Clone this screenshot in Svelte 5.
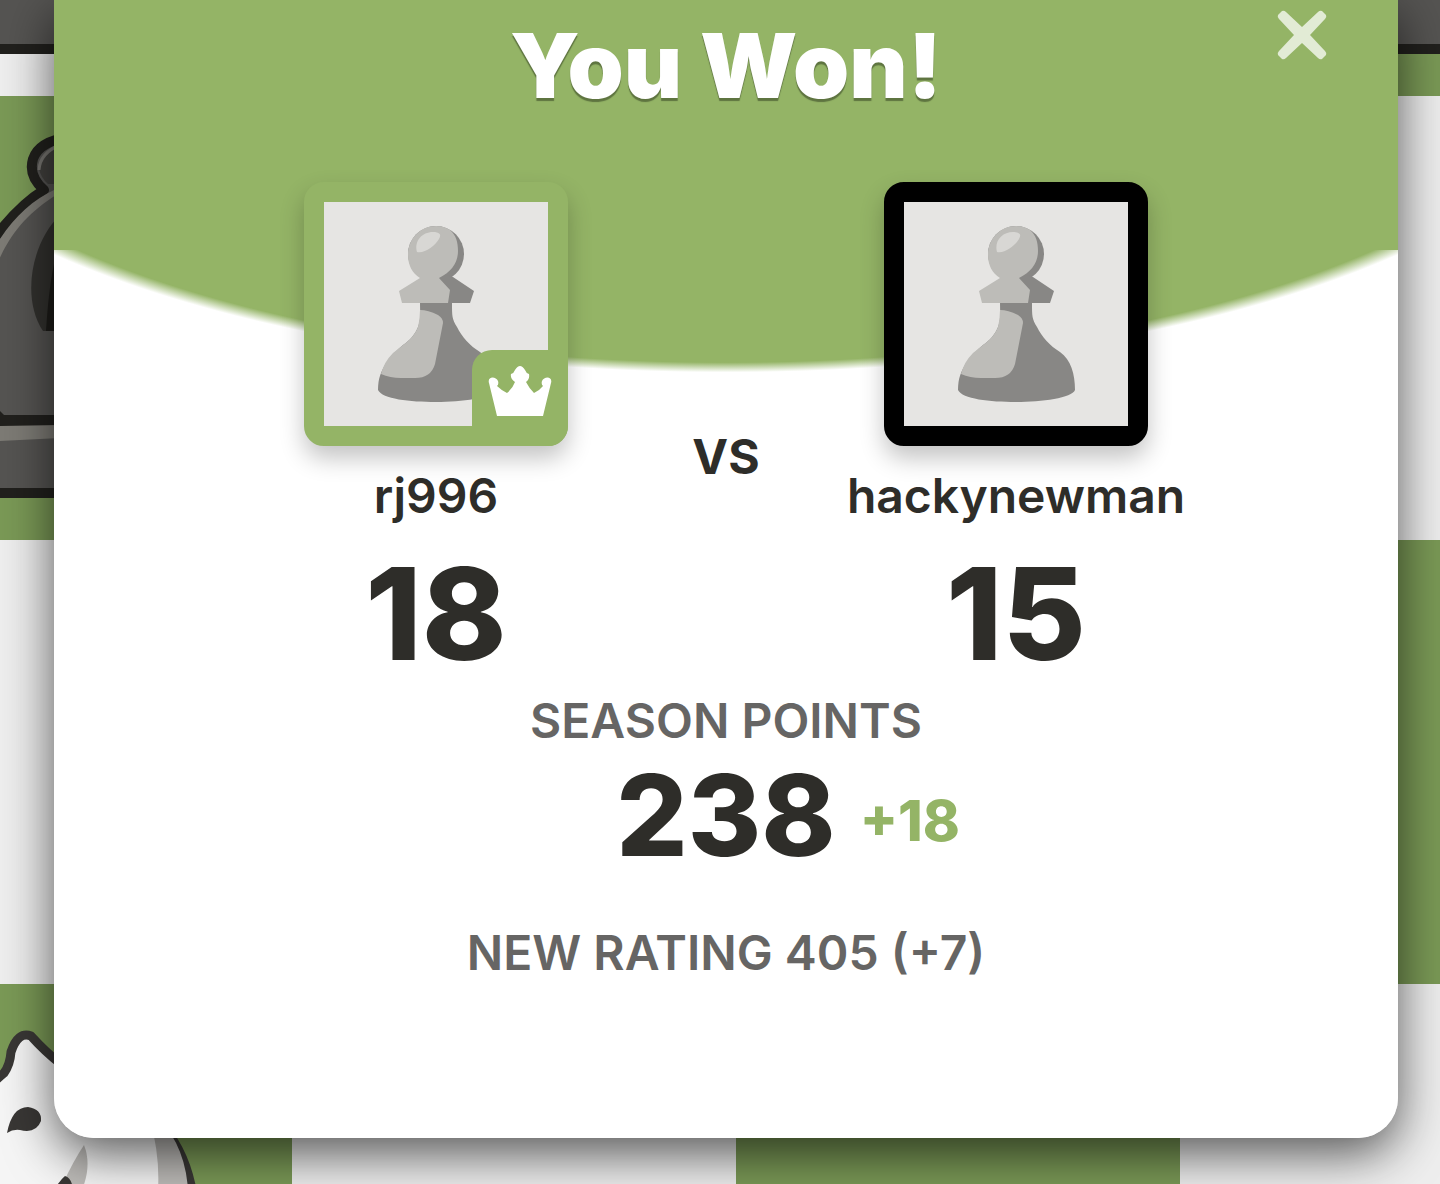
<script>
  const players = [
    { name: 'rj996', score: 18, winner: true },
    { name: 'hackynewman', score: 15, winner: false }
  ];
  let open = $state(true);
</script>

{#snippet pawn()}
  <svg class="pawn" viewBox="0 0 224 224" aria-hidden="true">
    <circle cx="112" cy="52" r="28" fill="#888785" />
    <path fill="#888785" d="M129 75L150 89L146 101H128C128 114 128 117 133 125C138 135 146 144 156 150C167 158 171 172 171 188C168 196 138 200 112 200S58 197 54 188C54 176 57 169 63 160C68 153 73 148 79 143C86 138 90 134 94 125C97 118 96 110 96 100L112 70Z" />
    <path fill="#bdbcb8" d="M112 24Q120 24 126 28C132 33 134 40 134 49C134 61 127 70 115 76L126 88L124 101H78L75 89L96 76C88 71 84 63 84 53C84 37 96 24 112 24Z" />
    <path fill="#bdbcb8" d="M96 108Q104 108 114 113Q119 116 119 121L111 162Q107 176 91 176H77Q66 176 57 172Q60 160 69 151C76 145 90 137 94 125Q96 117 96 108Z" />
    <path fill="#d8d7d4" d="M93 50C90 39 98 30 109 30C115 30 118 32 115 37C111 44 100 52 93 50Z" />
  </svg>
{/snippet}

<main>
  <svg class="pieces" aria-hidden="true">
    <rect x="-80" y="-40" width="240" height="89" fill="#555452" stroke="#21201d" stroke-width="10" />
    <rect x="1280" y="-40" width="240" height="89" fill="#555452" stroke="#21201d" stroke-width="10" />

    <g stroke="#21201d" stroke-width="10" stroke-linejoin="round">
      <path fill="#555452" d="M-40 430V300C-28 265 8 212 44 190Q28 176 33 159Q39 141 70 137L130 200V420H0Z" />
      <path fill="#555452" d="M-40 421H160V493H-40Z" />
    </g>
    <path fill="#7d7b75" d="M-2 242C14 217 32 200 56 189V195C30 212 12 230 -2 262Z" />
    <path fill="#41403d" d="M60 145Q38 154 39 169Q41 178 48 184H60Z" />
    <path fill="none" stroke="#777571" stroke-width="3" d="M39 170Q40 153 60 145" />
    <path fill="#32312e" d="M60 215C30 244 22 300 43 331H60Z" />
    <path fill="#1d1c19" d="M60 240C51 270 48 300 46 331H60Z" />
    <path fill="#7d7b75" d="M-2 426L60 425V438L-2 441Z" />
    <path fill="#21201d" d="M-2 409L6 417H-2Z" />

    <path fill="#f5f5f5" stroke="#393735" stroke-width="9" stroke-linejoin="round" d="M-30 1110Q-12 1086 4 1073Q10 1065 11 1052Q18 1031 31 1036Q60 1068 90 1082Q184 1110 194 1204H-30Z" />
    <path fill="#bdbbb8" d="M150 1120Q160 1155 158 1190H188Q185 1140 150 1110Z" />
    <path fill="#bdbbb8" d="M84 1145Q72 1163 60 1190H82Q92 1165 84 1145Z" />
    <path fill="#393735" d="M7 1133Q12 1107 28 1107Q42 1109 41 1121Q36 1134 20 1130Q13 1129 7 1133Z" />
    <path fill="#393735" d="M54 1190Q60 1180 65 1176Q72 1178 73 1190Z" />
  </svg>

  {#if open}
    <div class="modal" role="dialog" aria-labelledby="result-title">
      <header>
        <h1 id="result-title">You Won!</h1>
        <button class="close" aria-label="Close" onclick={() => (open = false)}>
          <svg viewBox="0 0 50 50" aria-hidden="true">
            <path d="M5 1Q7 0 9 2L25 17L41 2Q43 0 45 1L49 5Q50 7 48 9L33 25L48 41Q50 43 49 45L45 49Q43 50 41 48L25 33L9 48Q7 50 5 49L1 45Q0 43 2 41L17 25L2 9Q0 7 1 5Z" />
          </svg>
        </button>
      </header>

      <div class="players">
        {#each players as player, i}
          {#if i === 1}<span class="versus">VS</span>{/if}
          <div class="player">
            <div class="avatar" class:winner={player.winner}>
              {@render pawn()}
              {#if player.winner}
                <span class="crown">
                  <svg viewBox="0 0 64 52" role="img" aria-label="Winner">
                    <path fill="#fff" d="M9 51L1 18C-1 11 8 11 10 16Q11 19 9 21Q13 25 19 28Q25 23 27 17Q22 14 23 9Q26 8 27 5Q32 -3 37 5Q38 8 41 9Q42 14 38 17Q41 23 46 28Q52 25 55 21Q53 19 54 16C56 11 65 11 63 18L55 51Z" />
                  </svg>
                </span>
              {/if}
            </div>
            <span class="name">{player.name}</span>
            <span class="score">{player.score}</span>
          </div>
        {/each}
      </div>

      <div class="label">SEASON POINTS</div>
      <div class="points">
        <span></span>
        <strong>238</strong>
        <span class="gain">+18</span>
      </div>
      <div class="label rating">NEW RATING 405 (+7)</div>
    </div>
  {/if}
</main>

<style>
  :global(body) {
    margin: 0;
  }
  main {
    position: relative;
    box-sizing: border-box;
    min-height: 100vh;
    overflow: hidden;
    padding: 0 42px 46px 54px;
    font-family: Inter, 'Liberation Sans', sans-serif;
    color: #2e2d29;
    background: conic-gradient(#7a9956 25%, #eeeeee 0 50%, #7a9956 0 75%, #eeeeee 0) 292px 96px / 888px 888px;
  }
  .pieces {
    position: absolute;
    inset: 0;
    width: 100%;
    height: 100%;
  }
  .modal {
    position: relative;
    box-sizing: border-box;
    padding-bottom: 155px;
    border-radius: 0 0 40px 40px;
    background:
      linear-gradient(#94b466, #94b466) 0 0 / 100% 250px no-repeat,
      radial-gradient(ellipse 65% 331px at 50% 38px, #94b466 98%, #ffffff 101%);
    box-shadow: 0 16px 50px rgba(0, 0, 0, 0.64);
    text-align: center;
  }
  header {
    display: grid;
    grid-template-columns: 1fr auto 1fr;
    align-items: start;
    height: 182px;
  }
  h1 {
    grid-column: 2;
    margin: 0;
    padding-top: 12px;
    font-size: 90px;
    line-height: 108px;
    font-weight: 900;
    color: #fff;
    text-shadow: 0 3px 1px #5e7440;
  }
  .close {
    justify-self: end;
    width: 50px;
    height: 50px;
    margin: 10px 71px 0 0;
    padding: 0;
    border: 0;
    background: none;
    cursor: pointer;
  }
  .close svg {
    display: block;
  }
  .close path {
    fill: #e2ebd5;
  }
  .players {
    display: flex;
    justify-content: center;
    align-items: flex-start;
  }
  .player {
    display: flex;
    flex-direction: column;
    align-items: center;
    width: 400px;
  }
  .versus {
    width: 180px;
    margin-top: 245px;
    font-size: 48px;
    line-height: 60px;
    font-weight: 700;
  }
  .avatar {
    position: relative;
    width: 224px;
    height: 224px;
    border: 20px solid #000;
    border-radius: 20px;
    background: #e6e5e3;
    background-clip: padding-box;
    box-shadow: 0 12px 24px rgba(0, 0, 0, 0.24);
  }
  .avatar.winner {
    border-color: #94b466;
  }
  .pawn {
    display: block;
    width: 100%;
  }
  .crown {
    position: absolute;
    right: -20px;
    bottom: -20px;
    display: grid;
    place-items: center;
    width: 96px;
    height: 96px;
    border-radius: 20px 0 20px 0;
    background: #94b466;
  }
  .crown svg {
    width: 64px;
    margin-bottom: 14px;
    overflow: visible;
  }
  .name {
    margin-top: 20px;
    font-size: 48px;
    line-height: 60px;
    font-weight: 600;
  }
  .score {
    margin-top: 20px;
    font-size: 128px;
    line-height: 136px;
    font-weight: 800;
  }
  .label {
    margin-top: 9px;
    font-size: 48px;
    line-height: 60px;
    font-weight: 600;
    color: #666564;
  }
  .points {
    display: grid;
    grid-template-columns: 1fr auto 1fr;
    align-items: center;
    column-gap: 24px;
    line-height: 128px;
  }
  .points strong {
    font-size: 112px;
    font-weight: 800;
  }
  .gain {
    padding-top: 12px;
    font-size: 56px;
    line-height: 116px;
    font-weight: 800;
    text-align: left;
    color: #94b466;
  }
  .rating {
    margin-top: 44px;
  }
</style>
